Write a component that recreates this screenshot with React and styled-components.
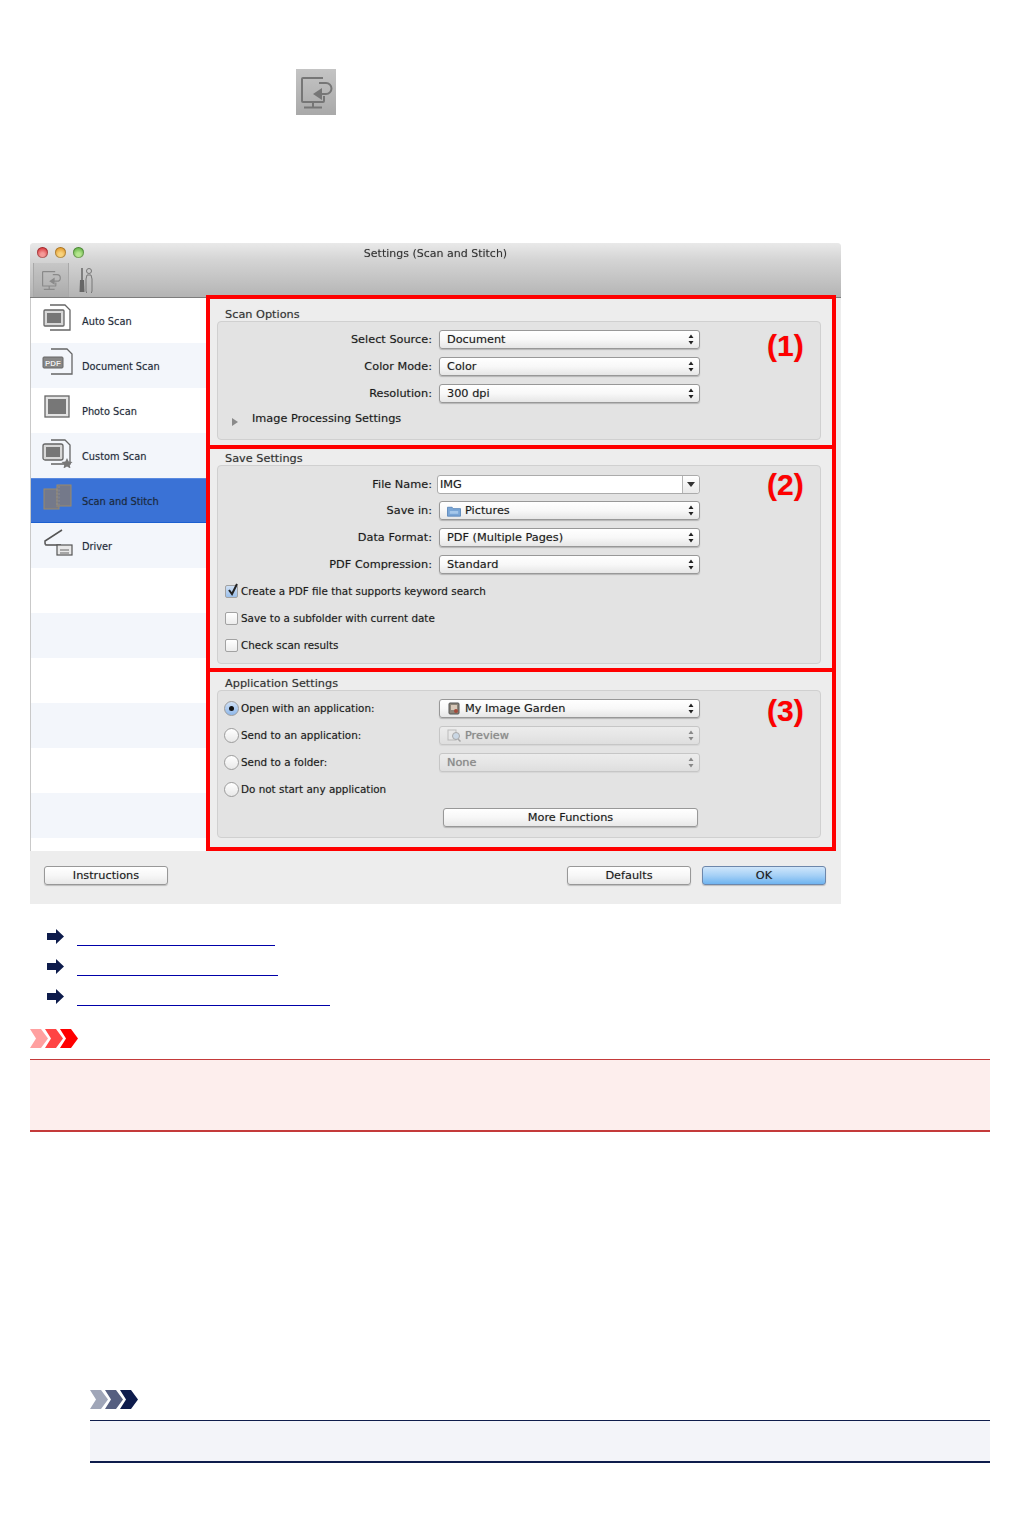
import React from 'react';
import styled, { createGlobalStyle } from 'styled-components';

const Global = createGlobalStyle`
  html, body {
    margin: 0;
    padding: 0;
    background: #fff;
    font-family: "DejaVu Sans", "Liberation Sans", sans-serif;
  }
`;

const Page = styled.div`
  width: 1021px;
  height: 1514px;
  box-sizing: border-box;
  padding: 69px 31px 0 30px;
  overflow: hidden;
`;

const TopIcon = styled.div`
  width: 40px;
  height: 46px;
  margin-left: 266px;
  background: linear-gradient(#c4c4c4, #a9a9a9);
  filter: blur(0.5px);
`;

const Window = styled.div`
  width: 811px;
  margin-top: 128px;
  background: #ededed;
  border-radius: 4px 4px 0 0;
  filter: blur(0.4px);
  color: #1a1a1a;
  font-size: 11.3px;
  text-shadow: 0 0 1px rgba(0, 0, 0, 0.3);
`;

const Chrome = styled.div`
  height: 55px;
  box-sizing: border-box;
  background: linear-gradient(#e9e9e9, #d5d5d5 30%, #b4b4b4);
  border-bottom: 1px solid #7d7d7d;
  border-radius: 4px 4px 0 0;
`;

const TitleRow = styled.div`
  position: relative;
  height: 20px;
  display: flex;
  align-items: center;
  justify-content: center;
  font-size: 11px;
  color: #333;
`;

const Lights = styled.div`
  position: absolute;
  left: 7px;
  top: 4px;
  display: flex;
  gap: 7px;
`;

const Light = styled.span`
  width: 11px;
  height: 11px;
  border-radius: 50%;
  background: radial-gradient(circle at 50% 70%, ${p => p.$light} 20%, ${p => p.$color} 75%);
  box-shadow: inset 0 0 0 1px rgba(0, 0, 0, 0.25);
`;

const Toolbar = styled.div`
  display: flex;
  align-items: stretch;
  height: 34px;
  padding-left: 3px;
`;

const ToolTab = styled.div`
  width: 34px;
  display: flex;
  align-items: center;
  justify-content: center;
  ${p => p.$active && `
    background: rgba(0, 0, 0, 0.05);
    border-left: 1px solid #a8a8a8;
    border-right: 1px solid #a8a8a8;
  `}
`;

const Body = styled.div`
  display: flex;
  align-items: stretch;
`;

const Sidebar = styled.div`
  width: 175px;
  background: #fff;
  border-left: 1px solid #c9c9c9;
  flex: none;
`;

const SideRow = styled.div`
  height: 45px;
  display: flex;
  align-items: center;
  box-sizing: border-box;
  padding-left: 11px;
  gap: 8px;
  font-size: 9.8px;
  color: #1d2a3a;
  background: ${p => (p.$selected ? '#3a72d6' : p.$alt ? '#f3f6fb' : '#fff')};
  ${p => p.$selected && 'border-top: 1px solid #5a8ae0; border-bottom: 1px solid #1b5fd0;'}
`;

const SideLabel = styled.span`
  margin-top: 2px;
`;

const SideIcon = styled.svg`
  width: 32px;
  height: 30px;
  flex: none;
  margin-top: -6px;
`;

const Panels = styled.div`
  width: 630px;
  margin-top: -3px;
  flex: none;
  position: relative;
`;

const RedBox = styled.div`
  border: 4px solid #f00;
  padding: ${p => p.$top}px 9px ${p => p.$bottom}px 7px;
  margin-top: ${p => (p.$first ? 0 : -4)}px;
`;

const Legend = styled.div`
  height: 14px;
  line-height: 16px;
  margin-left: 8px;
  color: #333;
`;

const Group = styled.div`
  position: relative;
  box-sizing: border-box;
  width: 604px;
  height: ${p => p.$h}px;
  padding-top: ${p => p.$pad}px;
  background: #e3e3e3;
  border: 1px solid #d0d0d0;
  border-radius: 4px;
`;

const Marker = styled.div`
  position: absolute;
  left: 549px;
  top: ${p => p.$top}px;
  font-family: "Liberation Sans", Arial, sans-serif;
  font-weight: 700;
  font-size: 30px;
  line-height: 34px;
  color: #f00;
`;

const Row = styled.div`
  height: 27px;
  display: flex;
  align-items: center;
`;

const FileRow = styled(Row)`
  height: 26px;
`;

const Label = styled.div`
  width: 214px;
  text-align: right;
  flex: none;
`;

const OptionText = styled.span`
  font-size: 10.4px;
  margin-bottom: 2px;
`;

const Select = styled.div`
  width: 261px;
  height: 19px;
  margin-left: 7px;
  flex: none;
  box-sizing: border-box;
  padding: 0 5px 0 7px;
  display: flex;
  align-items: center;
  gap: 4px;
  border: 1px solid ${p => (p.$disabled ? '#c6c6c6' : '#989898')};
  border-radius: 3px;
  background: ${p => (p.$disabled
    ? 'linear-gradient(#ececec, #e6e6e6 50%, #dedede)'
    : 'linear-gradient(#fff, #f8f8f8 50%, #e6e6e6)')};
  box-shadow: 0 1px 1px rgba(0, 0, 0, ${p => (p.$disabled ? 0.06 : 0.2)});
  color: ${p => (p.$disabled ? '#8a8a8a' : '#1a1a1a')};
`;

const SelectText = styled.span`
  flex: 1;
`;

const Combo = styled.div`
  width: 263px;
  height: 19px;
  margin-left: 5px;
  flex: none;
  box-sizing: border-box;
  display: flex;
  border: 1px solid #ababab;
  border-radius: 3px;
  background: #fff;
`;

const ComboInput = styled.div`
  flex: 1;
  padding-left: 2px;
  line-height: 17px;
  border-right: 1px solid #b4b4b4;
`;

const ComboButton = styled.div`
  width: 16px;
  display: flex;
  align-items: center;
  justify-content: center;
  background: linear-gradient(#fff, #e9e9e9);
  border-radius: 0 3px 3px 0;
`;

const DisclosureRow = styled.div`
  height: 22px;
  display: flex;
  align-items: center;
  padding-left: 14px;
  gap: 14px;
`;

const Triangle = styled.span`
  width: 0;
  height: 0;
  margin-top: 8px;
  border-left: 6px solid #8a8a8a;
  border-top: 4px solid transparent;
  border-bottom: 4px solid transparent;
`;

const Check = styled.div`
  width: 13px;
  height: 13px;
  margin-left: 7px;
  margin-right: 3px;
  flex: none;
  box-sizing: border-box;
  border: 1px solid #a2a2a2;
  border-radius: 2px;
  background: ${p => (p.$on ? 'linear-gradient(#cfe0f5, #9cc0ea)' : 'linear-gradient(#fff, #ececec)')};
  position: relative;
`;

const CheckMark = styled.svg`
  position: absolute;
  left: 0;
  top: -3px;
  width: 14px;
  height: 14px;
`;

const Radio = styled.div`
  width: 15px;
  height: 15px;
  margin-left: 6px;
  margin-right: 2px;
  flex: none;
  box-sizing: border-box;
  border: 1px solid #9c9c9c;
  border-radius: 50%;
  display: flex;
  align-items: center;
  justify-content: center;
  background: ${p => (p.$on ? 'linear-gradient(#cfe0f5, #8fb8ea)' : 'linear-gradient(#fff, #e8e8e8)')};
`;

const RadioDot = styled.span`
  width: 5px;
  height: 5px;
  border-radius: 50%;
  background: #111;
`;

const AppLabel = styled.div`
  width: 191px;
  flex: none;
  font-size: 10.4px;
  margin-bottom: 2px;
`;

const PushButton = styled.div`
  box-sizing: border-box;
  width: ${p => p.$w}px;
  height: 19px;
  line-height: 17px;
  font-size: 11.3px;
  text-align: center;
  border: 1px solid ${p => (p.$primary ? '#6d87ab' : '#989898')};
  border-radius: 3px;
  background: ${p => (p.$primary
    ? 'linear-gradient(#cfe6fb, #a5d0f6 50%, #6fb4f0)'
    : 'linear-gradient(#fff, #f7f7f7 50%, #e8e8e8)')};
  box-shadow: 0 1px 1px rgba(0, 0, 0, 0.2);
  color: #1a1a1a;
`;

const MoreRow = styled.div`
  margin: 5px 0 0 225px;
`;

const Footer = styled.div`
  height: 53px;
  box-sizing: border-box;
  display: flex;
  align-items: center;
  padding: 0 15px 4px 14px;
  gap: 11px;
`;

const FooterSpace = styled.div`
  flex: 1;
`;

const LinkList = styled.div`
  display: flex;
  flex-direction: column;
  gap: 13px;
  margin-top: 25px;
  padding-left: 17px;
`;

const LinkRow = styled.div`
  height: 17px;
  display: flex;
  gap: 13px;
`;

const LinkLine = styled.a`
  display: block;
  align-self: flex-end;
  width: ${p => p.$w}px;
  border-bottom: 1px solid #0000a8;
`;

const Chevrons = styled.svg`
  display: block;
  width: 48px;
  height: 19px;
`;

const WarnHead = styled.div`
  margin-top: 23px;
`;

const WarnBox = styled.div`
  height: 73px;
  margin-top: 11px;
  box-sizing: border-box;
  background: #fdeeed;
  border-top: 1px solid #c43a3a;
  border-bottom: 2px solid #c43a3a;
`;

const NoteSection = styled.div`
  margin: 258px 0 0 60px;
`;

const NoteBox = styled.div`
  height: 43px;
  margin-top: 11px;
  box-sizing: border-box;
  background: #f3f4f9;
  border-top: 1px solid #0e1c4c;
  border-bottom: 2px solid #0e1c4c;
`;

const Updown = ({ color = '#222' }) => (
  <svg width="6" height="11" viewBox="0 0 6 11">
    <path d="M3 0.5L5.5 4H0.5Z M3 10.5L5.5 7H0.5Z" fill={color} />
  </svg>
);

const MonitorIcon = ({ width = 40, height = 46, stroke = '#767676' }) => (
  <svg width={width} height={height} viewBox="0 0 40 46" fill="none" stroke={stroke}>
    <path d="M27 9H7a1 1 0 0 0-1 1v22a1 1 0 0 0 1 1h20a1 1 0 0 0 1-1v-5" strokeWidth="2" />
    <path d="M17 33v5M8 38.500h18" strokeWidth="2" />
    <path d="M23 14h7a5.500 5.500 0 0 1 0 11h-6" strokeWidth="2" />
    <path d="M26 19v12l-9-6z" fill={stroke} stroke="none" />
  </svg>
);

const ToolsIcon = () => (
  <svg width="14" height="26" viewBox="0 0 14 26">
    <path d="M3 1v12" stroke="#666" strokeWidth="1.5" />
    <path d="M1 13h4l.5 12h-5z" fill="#666" />
    <circle cx="10" cy="4" r="2.5" fill="none" stroke="#777" />
    <path d="M8 8h4l1 4v12a1 1 0 0 1-6 0V12z" fill="none" stroke="#777" />
  </svg>
);

const Doc = ({ x, y, w, h }) => (
  <path d={`M${x} ${y}h${w - 5}l5 5v${h - 5}h-${w}`} fill="none" stroke="#666" strokeWidth="1.3" />
);

const AutoIcon = () => (
  <SideIcon viewBox="0 0 32 30">
    <Doc x={8} y={2} w={20} h={25} />
    <rect x="2" y="7" width="20" height="16" rx="1" fill="#d8d8d8" stroke="#666" strokeWidth="1.3" />
    <rect x="5" y="10" width="14" height="10" fill="#777" />
  </SideIcon>
);

const PdfIcon = () => (
  <SideIcon viewBox="0 0 32 30">
    <Doc x={9} y={1} w={21} h={25} />
    <rect x="1" y="9" width="20" height="11" rx="1" fill="#888" stroke="#666" />
    <text x="11" y="18" textAnchor="middle" fontFamily="Liberation Sans" fontSize="8" fontWeight="700" fill="#eee">PDF</text>
  </SideIcon>
);

const PhotoIcon = () => (
  <SideIcon viewBox="0 0 32 30">
    <rect x="3" y="3" width="24" height="21" fill="#e3e3e3" stroke="#666" strokeWidth="1.3" />
    <rect x="6" y="6" width="18" height="15" fill="#777" />
  </SideIcon>
);

const CustomIcon = () => (
  <SideIcon viewBox="0 0 32 30">
    <Doc x={9} y={2} w={19} h={24} />
    <rect x="1" y="6" width="20" height="16" rx="2" fill="#d8d8d8" stroke="#666" strokeWidth="1.3" />
    <rect x="4" y="9" width="14" height="10" fill="#777" />
    <path d="M25 20l1.7 3.6 3.8.4-2.8 2.6.8 3.9-3.5-2-3.5 2 .8-3.9-2.8-2.6 3.8-.4z" fill="#777" />
  </SideIcon>
);

const StitchIcon = () => (
  <SideIcon viewBox="0 0 32 30">
    <rect x="2" y="6" width="15" height="20" fill="#74798a" stroke="#9a8a6a" />
    <rect x="15" y="2" width="14" height="21" fill="#74798a" stroke="#9a8a6a" />
    <path d="M15 6v18M17 3v20" stroke="#8d8d8d" strokeDasharray="2 1.5" />
  </SideIcon>
);

const DriverIcon = () => (
  <SideIcon viewBox="0 0 32 30">
    <path d="M20 2L3 13v2a2 2 0 0 0 2 2h14" fill="none" stroke="#555" strokeWidth="1.5" />
    <path d="M3 17h13" stroke="#777" />
    <rect x="15" y="17" width="15" height="10" fill="#e8e8e8" stroke="#555" strokeWidth="1.2" />
    <path d="M18 22h9M18 25h9" stroke="#666" />
  </SideIcon>
);

const FolderGlyph = () => (
  <svg width="14" height="12" viewBox="0 0 15 12">
    <path d="M0.5 2h5l1 1.5h8V11.500H0.500z" fill="#7aa6d6" stroke="#5d89bb" />
    <path d="M3 6h9v3H3z" fill="#a5c7ea" />
  </svg>
);

const GardenGlyph = () => (
  <svg width="14" height="13" viewBox="0 0 14 13">
    <rect x="2" y="1" width="10" height="11" rx="1" fill="#8d8579" stroke="#555" />
    <rect x="4" y="3" width="6" height="5" fill="#d8c8b8" />
    <circle cx="9" cy="9" r="2" fill="#a34a3a" />
  </svg>
);

const PreviewGlyph = () => (
  <svg width="14" height="13" viewBox="0 0 14 13" opacity="0.65">
    <rect x="1" y="1" width="8" height="10" fill="#e8e8e8" stroke="#a5a5a5" />
    <circle cx="9" cy="7" r="3.500" fill="#bcd0e4" stroke="#888" />
    <path d="M11 10l2.500 2.500" stroke="#888" strokeWidth="1.500" />
  </svg>
);

const Chevron3 = ({ colors }) => (
  <Chevrons viewBox="0 0 48 19">
    {colors.map((c, i) => (
      <polygon
        key={c}
        points={`${i * 15},0 ${i * 15 + 11},0 ${i * 15 + 18},9.5 ${i * 15 + 11},19 ${i * 15},19 ${i * 15 + 6},9.5`}
        fill={c}
      />
    ))}
  </Chevrons>
);

const LinkArrow = () => (
  <svg width="17" height="15" viewBox="0 0 17 15">
    <path d="M0 4h9V0l8 7.500-8 7.500v-4H0z" fill="#0e1c4c" />
  </svg>
);

const sideItems = [
  { name: 'Auto Scan', Icon: AutoIcon },
  { name: 'Document Scan', Icon: PdfIcon },
  { name: 'Photo Scan', Icon: PhotoIcon },
  { name: 'Custom Scan', Icon: CustomIcon },
  { name: 'Scan and Stitch', Icon: StitchIcon, selected: true },
  { name: 'Driver', Icon: DriverIcon },
  {}, {}, {}, {}, {}, {},
];

const Field = ({ label, children, icon }) => (
  <Row>
    <Label>{label}</Label>
    <Select>
      {icon}
      <SelectText>{children}</SelectText>
      <Updown />
    </Select>
  </Row>
);

const CheckRow = ({ on, children }) => (
  <Row>
    <Check $on={on}>
      {on && (
        <CheckMark viewBox="0 0 14 14">
          <path d="M3 7l3 4 5-10" fill="none" stroke="#222" strokeWidth="2" />
        </CheckMark>
      )}
    </Check>
    <OptionText>{children}</OptionText>
  </Row>
);

const AppRow = ({ on, label, children }) => (
  <Row>
    <Radio $on={on}>{on && <RadioDot />}</Radio>
    <AppLabel>{label}</AppLabel>
    {children}
  </Row>
);

export default function App() {
  return (
    <Page>
      <Global />
      <TopIcon>
        <MonitorIcon />
      </TopIcon>

      <Window>
        <Chrome>
          <TitleRow>
            <Lights>
              <Light $color="#d8353a" $light="#f59a98" />
              <Light $color="#e39a2c" $light="#f8d27c" />
              <Light $color="#62b245" $light="#b5e68e" />
            </Lights>
            Settings (Scan and Stitch)
          </TitleRow>
          <Toolbar>
            <ToolTab $active>
              <MonitorIcon width={24} height={28} stroke="#8a8a8a" />
            </ToolTab>
            <ToolTab>
              <ToolsIcon />
            </ToolTab>
          </Toolbar>
        </Chrome>

        <Body>
          <Sidebar>
            {sideItems.map(({ name, Icon, selected }, i) => (
              <SideRow key={i} $alt={i % 2 === 1} $selected={selected}>
                {Icon && <Icon />}
                {name && <SideLabel>{name}</SideLabel>}
              </SideRow>
            ))}
          </Sidebar>

          <Panels>
            <RedBox $first $top={8} $bottom={5}>
              <Legend>Scan Options</Legend>
              <Group $h={119} $pad={4}>
                <Marker $top={7}>(1)</Marker>
                <Field label="Select Source:">Document</Field>
                <Field label="Color Mode:">Color</Field>
                <Field label="Resolution:">300 dpi</Field>
                <DisclosureRow>
                  <Triangle />
                  Image Processing Settings
                </DisclosureRow>
              </Group>
            </RedBox>

            <RedBox $top={2} $bottom={4}>
              <Legend>Save Settings</Legend>
              <Group $h={199} $pad={5}>
                <Marker $top={2}>(2)</Marker>
                <FileRow>
                  <Label>File Name:</Label>
                  <Combo>
                    <ComboInput>IMG</ComboInput>
                    <ComboButton>
                      <svg width="8" height="5" viewBox="0 0 8 5">
                        <path d="M0 0h8L4 5z" fill="#333" />
                      </svg>
                    </ComboButton>
                  </Combo>
                </FileRow>
                <Field label="Save in:" icon={<FolderGlyph />}>Pictures</Field>
                <Field label="Data Format:">PDF (Multiple Pages)</Field>
                <Field label="PDF Compression:">Standard</Field>
                <CheckRow on>Create a PDF file that supports keyword search</CheckRow>
                <CheckRow>Save to a subfolder with current date</CheckRow>
                <CheckRow>Check scan results</CheckRow>
              </Group>
            </RedBox>

            <RedBox $top={4} $bottom={9}>
              <Legend>Application Settings</Legend>
              <Group $h={148} $pad={4}>
                <Marker $top={3}>(3)</Marker>
                <AppRow on label="Open with an application:">
                  <Select>
                    <GardenGlyph />
                    <SelectText>My Image Garden</SelectText>
                    <Updown />
                  </Select>
                </AppRow>
                <AppRow label="Send to an application:">
                  <Select $disabled>
                    <PreviewGlyph />
                    <SelectText>Preview</SelectText>
                    <Updown color="#888" />
                  </Select>
                </AppRow>
                <AppRow label="Send to a folder:">
                  <Select $disabled>
                    <SelectText>None</SelectText>
                    <Updown color="#888" />
                  </Select>
                </AppRow>
                <AppRow label="Do not start any application" />
                <MoreRow>
                  <PushButton $w={255}>More Functions</PushButton>
                </MoreRow>
              </Group>
            </RedBox>
          </Panels>
        </Body>

        <Footer>
          <PushButton $w={124}>Instructions</PushButton>
          <FooterSpace />
          <PushButton $w={124}>Defaults</PushButton>
          <PushButton $w={124} $primary>OK</PushButton>
        </Footer>
      </Window>

      <LinkList>
        <LinkRow><LinkArrow /><LinkLine $w={198} /></LinkRow>
        <LinkRow><LinkArrow /><LinkLine $w={201} /></LinkRow>
        <LinkRow><LinkArrow /><LinkLine $w={253} /></LinkRow>
      </LinkList>

      <WarnHead>
        <Chevron3 colors={['#ffa0a0', '#ff4444', '#ff0000']} />
      </WarnHead>
      <WarnBox />

      <NoteSection>
        <Chevron3 colors={['#a0a6b8', '#565f80', '#0e1c4c']} />
        <NoteBox />
      </NoteSection>
    </Page>
  );
}
